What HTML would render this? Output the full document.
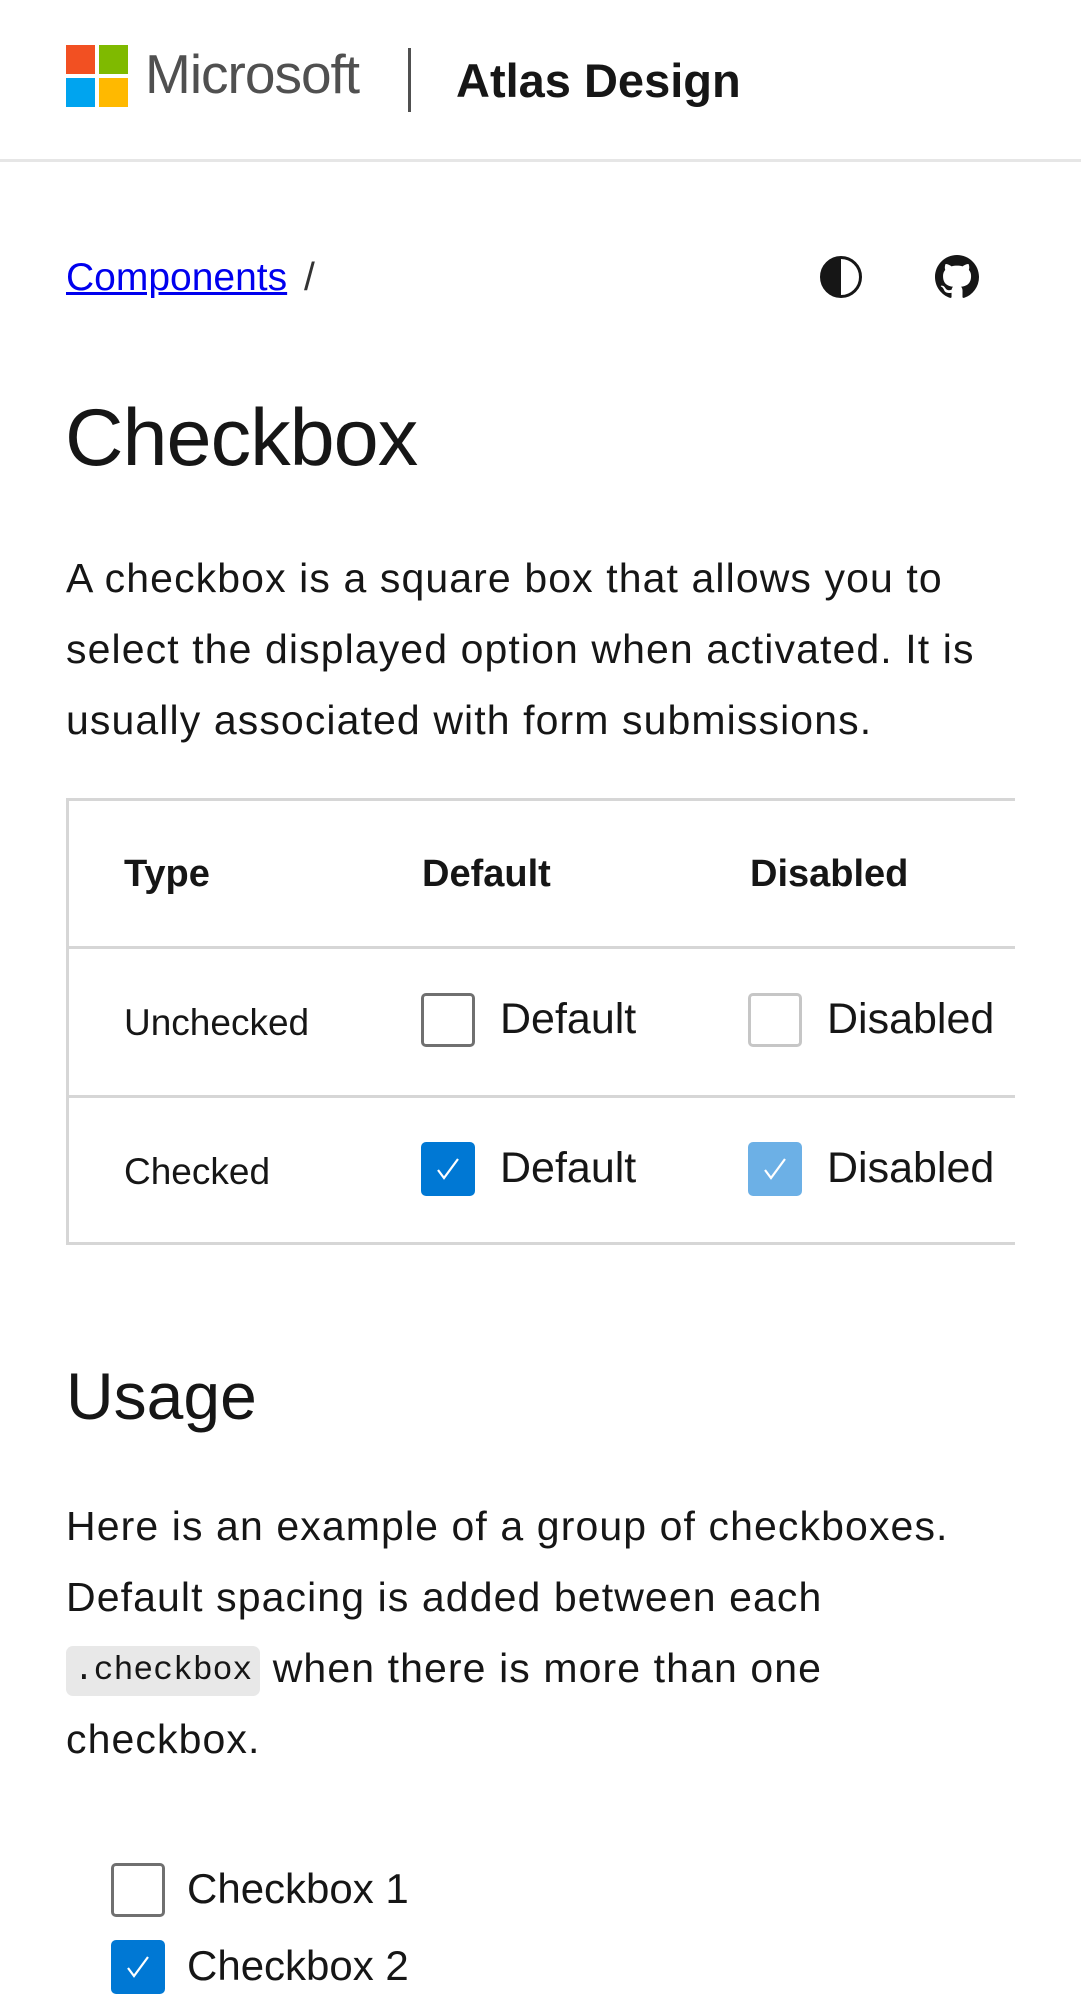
<!DOCTYPE html>
<html><head><meta charset="utf-8"><style>
*{margin:0;padding:0;box-sizing:border-box}
body{width:1081px;height:1999px;overflow:hidden;background:#fff;font-family:"Liberation Sans",sans-serif;color:#161616;position:relative}
.a{position:absolute;white-space:nowrap}
.cb{position:absolute;width:54px;height:54px;border:3px solid #707070;border-radius:5px;background:#fff}
.cb.d{border-color:#c6c6c6}
.cb.c{background:#0078d4;border-color:#0078d4}
.cb.cd{background:#6cb0e6;border-color:#6cb0e6}
.cb svg{position:absolute;left:8px;top:8px}
.hl{position:absolute;left:66px;width:949px;height:3px;background:#d6d6d6}
.p{font-size:41px;letter-spacing:1.1px}
</style></head><body>
<!-- header -->
<div class="a" style="left:66px;top:45px;width:29px;height:29px;background:#f25022"></div>
<div class="a" style="left:99px;top:45px;width:29px;height:29px;background:#7fba00"></div>
<div class="a" style="left:66px;top:78px;width:29px;height:29px;background:#00a4ef"></div>
<div class="a" style="left:99px;top:78px;width:29px;height:29px;background:#ffb900"></div>
<div class="a" style="left:145px;top:42px;font-size:55px;color:#505050;letter-spacing:-1px">Microsoft</div>
<div class="a" style="left:408px;top:48px;width:3px;height:64px;background:#505050"></div>
<div class="a" style="left:456px;top:53px;font-size:47px;font-weight:bold;color:#161616">Atlas Design</div>
<div class="a" style="left:0;top:159px;width:1081px;height:3px;background:#e6e6e6"></div>
<!-- breadcrumb -->
<div class="a" style="left:66px;top:256px;font-size:39px;color:#0000ee;text-decoration:underline">Components</div>
<div class="a" style="left:304px;top:256px;font-size:39px;color:#333">/</div>
<svg class="a" style="left:819px;top:255px" width="44" height="44" viewBox="0 0 44 44"><circle cx="22" cy="22" r="19.5" fill="#fff" stroke="#161616" stroke-width="3"/><path d="M22 2.5A19.5 19.5 0 0 0 22 41.5Z" fill="#161616"/></svg>
<svg class="a" style="left:935px;top:255px" width="44" height="44" viewBox="0 0 16 16"><path fill="#161616" d="M8 0C3.58 0 0 3.58 0 8c0 3.540 2.29 6.53 5.47 7.59.4.07.55-.17.55-.38 0-.19-.01-.82-.01-1.49-2.01.37-2.530-.49-2.69-.94-.09-.23-.48-.94-.82-1.130-.28-.15-.68-.52-.01-.53.63-.01 1.08.58 1.23.82.72 1.21 1.87.87 2.33.66.07-.52.28-.87.51-1.07-1.78-.2-3.64-.89-3.64-3.95 0-.87.31-1.59.82-2.15-.08-.2-.36-1.02.08-2.12 0 0 .67-.21 2.2.82.64-.18 1.32-.27 2-.27.68 0 1.36.09 2 .27 1.53-1.04 2.2-.82 2.2-.82.44 1.1.16 1.92.08 2.12.51.56.82 1.27.82 2.15 0 3.07-1.87 3.75-3.65 3.95.29.25.54.73.54 1.48 0 1.07-.01 1.93-.01 2.2 0 .21.15.46.55.38A8.013 8.013 0 0016 8c0-4.420-3.58-8-8-8z"/></svg>
<!-- title -->
<div class="a" style="left:65px;top:388px;font-size:81px;line-height:100px;letter-spacing:-1px">Checkbox</div>
<div class="a p" style="left:66px;top:543px;line-height:71px">A checkbox is a square box that allows you to<br>select the displayed option when activated. It is<br>usually associated with form submissions.</div>
<!-- table -->
<div class="hl" style="top:798px"></div>
<div class="hl" style="top:946px"></div>
<div class="hl" style="top:1095px"></div>
<div class="hl" style="top:1242px"></div>
<div class="a" style="left:66px;top:798px;width:3px;height:447px;background:#d6d6d6"></div>
<div class="a" style="left:124px;top:853px;font-size:38px;font-weight:bold">Type</div>
<div class="a" style="left:422px;top:853px;font-size:38px;font-weight:bold">Default</div>
<div class="a" style="left:750px;top:853px;font-size:38px;font-weight:bold">Disabled</div>
<div class="a" style="left:124px;top:1002px;font-size:37px">Unchecked</div>
<div class="cb" style="left:421px;top:993px"></div>
<div class="a" style="left:500px;top:995px;font-size:43px">Default</div>
<div class="cb d" style="left:748px;top:993px"></div>
<div class="a" style="left:827px;top:995px;font-size:43px">Disabled</div>
<div class="a" style="left:124px;top:1151px;font-size:37px">Checked</div>
<div class="cb c" style="left:421px;top:1142px"><svg width="32" height="32" viewBox="0 0 32 32"><path d="M6 17l6 8L26 6" fill="none" stroke="#fff" stroke-width="2.2"/></svg></div>
<div class="a" style="left:500px;top:1144px;font-size:43px">Default</div>
<div class="cb cd" style="left:748px;top:1142px"><svg width="32" height="32" viewBox="0 0 32 32"><path d="M6 17l6 8L26 6" fill="none" stroke="#fff" stroke-width="2.2"/></svg></div>
<div class="a" style="left:827px;top:1144px;font-size:43px">Disabled</div>
<!-- usage -->
<div class="a" style="left:66px;top:1356px;font-size:66px;line-height:80px">Usage</div>
<div class="a p" style="left:66px;top:1491px;line-height:71px">Here is an example of a group of checkboxes.<br>Default spacing is added between each<br><span style="display:inline-block;background:#e8e8e8;border-radius:7px;font-family:'Liberation Mono',monospace;font-size:33px;letter-spacing:0;line-height:50px;padding:0 8px;vertical-align:middle">.checkbox</span> when there is more than one<br>checkbox.</div>
<div class="cb" style="left:111px;top:1863px"></div>
<div class="a" style="left:187px;top:1865px;font-size:42px">Checkbox 1</div>
<div class="cb c" style="left:111px;top:1940px"><svg width="32" height="32" viewBox="0 0 32 32"><path d="M6 17l6 8L26 6" fill="none" stroke="#fff" stroke-width="2.2"/></svg></div>
<div class="a" style="left:187px;top:1942px;font-size:42px">Checkbox 2</div>
</body></html>
